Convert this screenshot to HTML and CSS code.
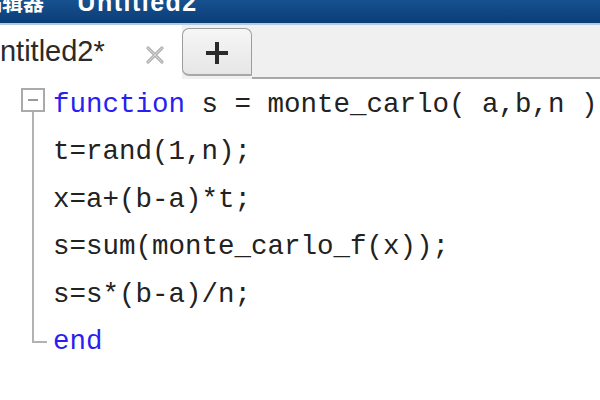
FILE: index.html
```html
<!DOCTYPE html>
<html>
<head>
<meta charset="utf-8">
<link rel="stylesheet" href="styles.css">
</head>
<body>
<div class="titlebar">
  <span class="title-cn">编辑器</span>
  <span class="title-sep">-</span>
  <span class="title-en">Untitled2</span>
</div>
<div class="tabbar">
  <div class="tab-active">
    <span class="tab-label">Untitled2*</span>
    <svg class="tab-close" width="22" height="22" viewBox="0 0 22 22">
      <path d="M4 4 L18 18 M18 4 L4 18" stroke="#b4b4b4" stroke-width="3.2" stroke-linecap="round"/>
      <path d="M4 4 L18 18 M18 4 L4 18" stroke="#d6d6d6" stroke-width="1" stroke-linecap="round"/>
    </svg>
  </div>
  <div class="tab-new">
    <svg width="26" height="26" viewBox="0 0 26 26">
      <path d="M13 2 V24 M2 13 H24" stroke="#2b2b2b" stroke-width="4"/>
    </svg>
  </div>
  <div class="tab-rest"></div>
</div>
<div class="editor">
  <div class="gutter">
    <svg width="53" height="282" viewBox="0 0 53 282">
      <rect x="22" y="10" width="22" height="22" fill="#fff" stroke="#aaaaaa" stroke-width="2"/>
      <path d="M28 21 H38" stroke="#9a9a9a" stroke-width="2"/>
      <path d="M33 33 V263 H47" fill="none" stroke="#b2b2b2" stroke-width="2"/>
    </svg>
  </div>
  <div class="code">
    <div class="line"><span class="kw">function</span> s = monte_carlo( a,b,n )</div>
    <div class="line">t=rand(1,n);</div>
    <div class="line">x=a+(b-a)*t;</div>
    <div class="line">s=sum(monte_carlo_f(x));</div>
    <div class="line">s=s*(b-a)/n;</div>
    <div class="line"><span class="kw">end</span></div>
  </div>
</div>
</body>
</html>
```
FILE: styles.css
```css
html, body {
  margin: 0;
  padding: 0;
  width: 600px;
  height: 400px;
  overflow: hidden;
  background: #ffffff;
}

.titlebar {
  height: 23px;
  background: linear-gradient(#17518f, #0a3d77);
  border-bottom: 2px solid #b4c8e0;
  display: flex;
  align-items: flex-start;
  overflow: hidden;
  color: #ffffff;
  white-space: nowrap;
}

.title-cn {
  font-family: "Noto Sans CJK SC", sans-serif;
  font-size: 21px;
  font-weight: bold;
  line-height: 24px;
  margin-top: -11px;
  margin-left: -19px;
}

.title-sep {
  font-family: "Liberation Sans", sans-serif;
  font-size: 22px;
  line-height: 24px;
  margin-top: -16px;
  margin-left: 14px;
}

.title-en {
  font-family: "Liberation Sans", sans-serif;
  font-size: 25px;
  font-weight: bold;
  line-height: 24px;
  letter-spacing: 1.5px;
  margin-top: -10px;
  margin-left: 12px;
}

.tabbar {
  display: flex;
  height: 54px;
  background: #f0f0f0;
}

.tab-active {
  flex: none;
  width: 203px;
  margin-left: -21px;
  background: #ffffff;
  display: flex;
  align-items: flex-start;
}

.tab-label {
  font-family: "Liberation Sans", sans-serif;
  font-size: 29px;
  line-height: 33px;
  color: #2a2a2a;
  padding-top: 10px;
}

.tab-close {
  margin-top: 19px;
  margin-left: 39px;
}

.tab-new {
  flex: none;
  width: 70px;
  margin-top: 3px;
  height: 48px;
  box-sizing: border-box;
  border: 1px solid #9c9c9c;
  border-bottom: 2px solid #a8a8a8;
  border-radius: 7px 7px 0 7px;
  background: linear-gradient(#f6f6f6, #e6e6e6);
  display: flex;
  align-items: flex-start;
  justify-content: center;
}

.tab-new svg {
  margin-top: 11px;
}

.tab-rest {
  flex: 1;
  border-bottom: 2px solid #a8a8a8;
}

.editor {
  display: flex;
}

.gutter {
  flex: none;
  width: 53px;
}

.gutter svg {
  display: block;
}

.code {
  font-family: "Liberation Mono", monospace;
  font-size: 27.5px;
  line-height: 47.4px;
  color: #222222;
  padding-top: 2px;
}

.line {
  white-space: pre;
  height: 47.4px;
}

.kw {
  color: #2a1ff0;
}
```
